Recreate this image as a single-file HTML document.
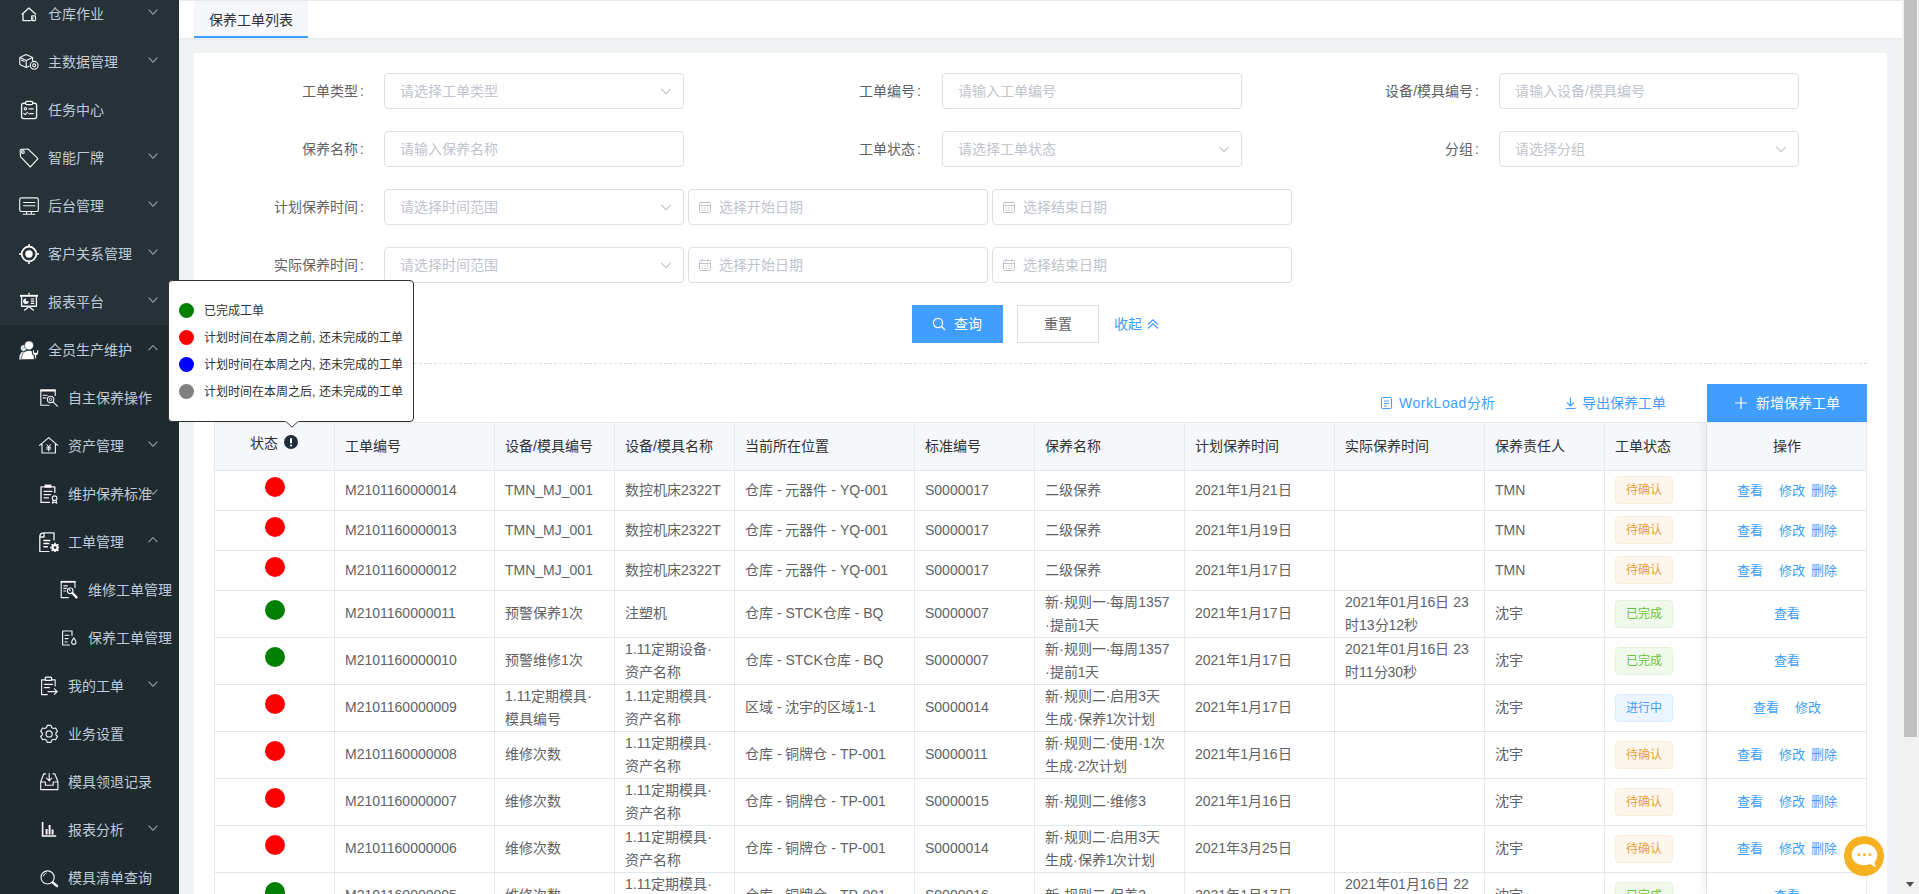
<!DOCTYPE html>
<html lang="zh-CN"><head><meta charset="utf-8"><title>保养工单列表</title><style>
*{box-sizing:border-box;margin:0;padding:0}
html,body{width:1919px;height:894px;overflow:hidden}
body{position:relative;background:#f0f3f4;font-family:"Liberation Sans",sans-serif;font-size:14px;color:#606266}
.abs{position:absolute}
#side{left:0;top:0;width:179px;height:894px;background:#263238;overflow:hidden}
#side .dark{position:absolute;left:0;top:325px;width:179px;height:569px;background:#1f2a2f}
.mi{position:absolute;left:0;width:179px;height:48px;line-height:48px;color:#bfcbd9;font-size:14px;white-space:nowrap}
.mi svg.ic{position:absolute;top:14px;width:20px;height:20px}
.mi span{position:absolute;top:0}
.mi svg.ar{position:absolute;left:147px;top:16px;width:12px;height:12px}
#topbar{left:179px;top:0;width:1723px;height:38px;background:#fff;border-top:1px solid #e7eaee;box-shadow:0 1px 2px rgba(0,21,41,.05)}
#tab{left:194px;top:1px;width:114px;height:37px;background:#f5f7fa;border-bottom:2px solid #409eff;color:#303133;font-size:14px;line-height:38px;text-align:center}
#panel{left:194px;top:53px;width:1693px;height:841px;background:#fff}
#sbar{left:1902px;top:0;width:17px;height:894px;background:#f1f1f1}
#sbar .th{position:absolute;left:2px;top:0;width:13px;height:737px;background:#c1c1c1}
#sbar .dn{position:absolute;left:4px;top:882px;width:0;height:0;border-left:4.5px solid transparent;border-right:4.5px solid transparent;border-top:5px solid #505050}
.lbl{position:absolute;height:36px;line-height:36px;text-align:right;color:#606266;font-size:14px;white-space:nowrap}
.inp{position:absolute;width:300px;height:36px;border:1px solid #dcdfe6;border-radius:4px;background:#fff;color:#c0c4cc;font-size:14px;line-height:34px;padding-left:15px;white-space:nowrap}
.inp svg.ar{position:absolute;right:11px;top:10.500px;width:12px;height:12px}
.inp svg.cal{position:absolute;left:9px;top:10px;width:14px;height:14px}
.inp.date{padding-left:30px}
.btn{position:absolute;height:38px;line-height:38px;font-size:14px;text-align:center;white-space:nowrap}
.link{position:absolute;color:#409eff;font-size:14px;white-space:nowrap;height:20px;line-height:20px}
#dash{left:214px;top:363px;width:1653px;height:0;border-top:1px dashed #d3dde2}
table{border-collapse:separate;border-spacing:0;table-layout:fixed}
#tbl{left:214px;top:422px;width:1653px;border-left:1px solid #e6ebf0;border-top:1px solid #e6ebf0}
#tbl table{width:1652px}
#tbl th{height:48px;background:#f5f7fa;color:#303133;font-weight:normal;text-align:left;padding:0 10px;border-right:1px solid #e6ebf0;border-bottom:1px solid #dfe6ec;font-size:14px;line-height:23px}
#tbl td{height:40px;padding:0 10px;border-right:1px solid #e6ebf0;border-bottom:1px solid #dfe6ec;font-size:14px;line-height:23px;color:#606266;vertical-align:middle;white-space:nowrap;background:#fff}
#tbl td.c,#tbl th.c{text-align:center}
.dot{display:inline-block;width:20px;height:20px;border-radius:50%;vertical-align:middle}
.tag{display:inline-block;height:28px;line-height:26px;padding:0 10px;position:relative;font-size:12px;border:1px solid;border-radius:4px;vertical-align:middle;white-space:nowrap}
.tag.w{background:#fdf6ec;border-color:#faecd8;color:#e6a23c}
.tag.s{background:#f0f9eb;border-color:#e1f3d8;color:#67c23a}
.tag.p{background:#ecf5ff;border-color:#d9ecff;color:#409eff}
td.op{color:#409eff}
td.op a{color:#409eff;text-decoration:none;display:inline-block;font-size:13px}
#tbl tr.sh .tag{top:-1px}
#tbl tr.tl td.one{padding-bottom:1px}
#fixsh{left:1707px;top:422px;width:160px;height:472px;box-shadow:-3px 0 8px rgba(0,0,0,.07);pointer-events:none}
#pop{left:168px;top:280px;width:246px;height:142px;background:#fff;border:1px solid #303133;border-radius:4px;font-size:12px;color:#303133}
#pop .r{position:absolute;left:10px;height:27px;line-height:27px;white-space:nowrap}
#pop .r i{position:absolute;left:0;top:7px;width:15px;height:15px;border-radius:50%}
#pop .r span{position:absolute;left:25px;top:2px}
#chat{left:1844px;top:836px;width:40px;height:40px;border-radius:50%;background:#f5b120}
</style></head><body><div id="side" class="abs"><div class="dark"></div><div class="mi" style="top:-10px"><svg class="ic" style="left:19px" viewBox="0 0 20 20"><path d="M2.8 10.6 L9.9 4 L17 10.6 M4 9.8 V16.6 H12" fill="none" stroke="#eef0f1" stroke-width="1.35" stroke-linejoin="round" stroke-linecap="butt"/><rect x="12.6" y="11.8" width="3.9" height="4.8" rx="0.8" fill="none" stroke="#eef0f1" stroke-width="1.15" stroke-linejoin="round" stroke-linecap="round"/><path d="M13.8 13.5v2" fill="none" stroke="#eef0f1" stroke-width="1.15" stroke-linejoin="round" stroke-linecap="round"/></svg><span style="left:48px">仓库作业</span><svg class="ar" viewBox="0 0 12 12"><path d="M1.5 3.7 L6 8.2 L10.5 3.7" fill="none" stroke="#95a1a9" stroke-width="1.1"/></svg></div><div class="mi" style="top:38px"><svg class="ic" style="left:19px" viewBox="0 0 20 20"><path d="M0.8 5.6 L7.2 2.6 L13.6 5.6 V8.6 M0.8 5.6 V12.6 L7.2 15.6 V8.6 L13.6 5.6 M0.8 5.600 L7.2 8.6 M7.2 15.6 L10 14.300 M2.6 8.2 l2.4 1.1" fill="none" stroke="#eef0f1" stroke-width="1.15" stroke-linejoin="round" stroke-linecap="round"/><circle cx="15.2" cy="13.3" r="3.9" fill="none" stroke="#eef0f1" stroke-width="1.15" stroke-linejoin="round" stroke-linecap="round"/><circle cx="15.2" cy="13.3" r="1.5" fill="none" stroke="#eef0f1" stroke-width="1.15" stroke-linejoin="round" stroke-linecap="round"/></svg><span style="left:48px">主数据管理</span><svg class="ar" viewBox="0 0 12 12"><path d="M1.5 3.7 L6 8.2 L10.5 3.7" fill="none" stroke="#95a1a9" stroke-width="1.1"/></svg></div><div class="mi" style="top:86px"><svg class="ic" style="left:19px" viewBox="0 0 20 20"><rect x="2.600" y="3.2" width="15" height="15.4" rx="2" fill="none" stroke="#eef0f1" stroke-width="1.35" stroke-linejoin="round" stroke-linecap="butt"/><rect x="6.6" y="1.4" width="7" height="3.2" rx="1.2" fill="#263238" stroke="#fff" stroke-width="1.25"/><path d="M9.8 8.8h4.600 M9.8 13.600h4.600 M4.800 13.3 l1.400 1.400 l2.300-2.400" fill="none" stroke="#eef0f1" stroke-width="1.15" stroke-linejoin="round" stroke-linecap="round"/><circle cx="6.4" cy="8.800" r="1.200" fill="none" stroke="#eef0f1" stroke-width="1.15" stroke-linejoin="round" stroke-linecap="round"/></svg><span style="left:48px">任务中心</span></div><div class="mi" style="top:134px"><svg class="ic" style="left:19px" viewBox="0 0 20 20"><path d="M1.2 2.6 Q1.2 1.500 2.400 1.400 L9 1 L19 10.600 L11.300 19 L1.500 8.600 Z" fill="none" stroke="#eef0f1" stroke-width="1.15" stroke-linejoin="round" stroke-linecap="round"/><circle cx="3.900" cy="4" r="1.400" fill="none" stroke="#eef0f1" stroke-width="1.15" stroke-linejoin="round" stroke-linecap="round"/></svg><span style="left:48px">智能厂牌</span><svg class="ar" viewBox="0 0 12 12"><path d="M1.5 3.7 L6 8.2 L10.5 3.7" fill="none" stroke="#95a1a9" stroke-width="1.1"/></svg></div><div class="mi" style="top:182px"><svg class="ic" style="left:19px" viewBox="0 0 20 20"><rect x="0.700" y="1.900" width="18.600" height="13.600" rx="1.600" fill="none" stroke="#eef0f1" stroke-width="1.15" stroke-linejoin="round" stroke-linecap="round"/><path d="M4.600 6.500h11.200 M4.600 9.700h11.200" fill="none" stroke="#eef0f1" stroke-width="1.15" stroke-linejoin="round" stroke-linecap="round"/><path d="M4.200 18.200h11.600 M7.600 15.600v2.400 M12.400 15.600v2.400" fill="none" stroke="#eef0f1" stroke-width="1.15" stroke-linejoin="round" stroke-linecap="round"/></svg><span style="left:48px">后台管理</span><svg class="ar" viewBox="0 0 12 12"><path d="M1.5 3.7 L6 8.2 L10.5 3.7" fill="none" stroke="#95a1a9" stroke-width="1.1"/></svg></div><div class="mi" style="top:230px"><svg class="ic" style="left:19px" viewBox="0 0 20 20"><circle cx="10" cy="10" r="7.300" fill="none" stroke="#fff" stroke-width="1.700"/><circle cx="10" cy="10" r="3.700" fill="#fff"/><path d="M10 0v2.400 M10 17.600V20 M0 10h2.400 M17.600 10H20" stroke="#fff" stroke-width="1.500" stroke-linecap="round"/></svg><span style="left:48px">客户关系管理</span><svg class="ar" viewBox="0 0 12 12"><path d="M1.5 3.7 L6 8.2 L10.5 3.7" fill="none" stroke="#95a1a9" stroke-width="1.1"/></svg></div><div class="mi" style="top:278px"><svg class="ic" style="left:19px" viewBox="0 0 20 20"><path d="M1 3.800h18" stroke="#fff" stroke-width="1.900" fill="none"/><path d="M10 0.800V3.400 M2.600 4.200V14.200H17.400V4.200 M10 14.400 L5.200 18.400 M10 14.400 L14.800 18.400" fill="none" stroke="#eef0f1" stroke-width="1.35" stroke-linejoin="round" stroke-linecap="butt"/><circle cx="6.900" cy="9.200" r="2.700" fill="#fff"/><path d="M6.900 9.200 L6.900 6 A3.200 3.200 0 0 1 10.100 9.200Z" fill="#263238"/><path d="M11.800 7h3.400 M11.800 9.200h3.400 M11.800 11.400h3.400" stroke="#fff" stroke-width="1.200" fill="none"/></svg><span style="left:48px">报表平台</span><svg class="ar" viewBox="0 0 12 12"><path d="M1.5 3.7 L6 8.2 L10.5 3.7" fill="none" stroke="#95a1a9" stroke-width="1.1"/></svg></div><div class="mi" style="top:326px"><svg class="ic" style="left:19px" viewBox="0 0 20 20"><circle cx="4.6" cy="8" r="2.9" fill="#dfe2e4"/><path d="M0.2 19.500C0.200 14.500 1.800 11.600 5 11.600L7.500 19.500z" fill="#dfe2e4"/><circle cx="10" cy="5.400" r="4.500" fill="#fff" stroke="#1f2a2f" stroke-width="0.600"/><path d="M2.600 19.500C2.600 13.400 5.400 10.400 10 10.400c4.600 0 7 3 7 9.100z" fill="#fff" stroke="#1f2a2f" stroke-width="0.600"/><path d="M13.400 9.600h2.200v2.600h2v-2.600h2.200v3.600a3.200 3.200 0 0 1-2 2.300v3.400h-2.400v-3.400a3.200 3.200 0 0 1-2-2.300z" fill="#fff" stroke="#1f2a2f" stroke-width="1.100"/></svg><span style="left:48px">全员生产维护</span><svg class="ar" viewBox="0 0 12 12"><path d="M1.5 8.2 L6 3.7 L10.5 8.2" fill="none" stroke="#95a1a9" stroke-width="1.1"/></svg></div><div class="mi" style="top:374px"><svg class="ic" style="left:39px" viewBox="0 0 20 20"><path d="M1.200 2.400h15.600" stroke="#fff" stroke-width="2.200" fill="none"/><path d="M1.800 3V17.200H10 M16.200 3V7.600" fill="none" stroke="#eef0f1" stroke-width="1.15" stroke-linejoin="round" stroke-linecap="round"/><path d="M4.200 7.200h4 M4.200 9.800h2.600" fill="none" stroke="#eef0f1" stroke-width="1.15" stroke-linejoin="round" stroke-linecap="round"/><circle cx="11.600" cy="11.400" r="3.200" fill="none" stroke="#eef0f1" stroke-width="1.15" stroke-linejoin="round" stroke-linecap="round"/><circle cx="11.600" cy="11.400" r="1.200" fill="none" stroke="#fff" stroke-width="0.800"/><path d="M14 13.800 L18.400 18.200" fill="none" stroke="#eef0f1" stroke-width="1.15" stroke-linejoin="round" stroke-linecap="round"/></svg><span style="left:68px">自主保养操作</span></div><div class="mi" style="top:422px"><svg class="ic" style="left:39px" viewBox="0 0 20 20"><path d="M0.600 9.400 L9.700 1.600 L18.800 9.400 M3 8.200V17H16.400V8.200" fill="none" stroke="#eef0f1" stroke-width="1.15" stroke-linejoin="round" stroke-linecap="round"/><path d="M7.700 8.400 L9.700 10.800 L11.700 8.400 M7.300 11.200h4.800 M7.300 13h4.800 M9.700 10.800V15.400" stroke="#fff" stroke-width="1" fill="none"/></svg><span style="left:68px">资产管理</span><svg class="ar" viewBox="0 0 12 12"><path d="M1.5 3.7 L6 8.2 L10.5 3.7" fill="none" stroke="#95a1a9" stroke-width="1.1"/></svg></div><div class="mi" style="top:470px"><svg class="ic" style="left:39px" viewBox="0 0 20 20"><path d="M15.800 9V2.800H2V18.400H11" fill="none" stroke="#eef0f1" stroke-width="1.35" stroke-linejoin="round" stroke-linecap="butt"/><path d="M5.600 0.600h6.800v3h-6.800z" fill="#fff"/><path d="M5 7.400h8 M5 10.600h6.600 M5 13.800h4.600" fill="none" stroke="#eef0f1" stroke-width="1.15" stroke-linejoin="round" stroke-linecap="round"/><circle cx="15.600" cy="14.200" r="2.300" fill="none" stroke="#eef0f1" stroke-width="1.15" stroke-linejoin="round" stroke-linecap="round"/><path d="M14.200 16.400 L13.400 19.200 L15.600 18 L17.800 19.200 L17 16.400" fill="none" stroke="#eef0f1" stroke-width="1.15" stroke-linejoin="round" stroke-linecap="round"/></svg><span style="left:68px">维护保养标准</span><svg class="ar" viewBox="0 0 12 12"><path d="M1.5 3.7 L6 8.2 L10.5 3.7" fill="none" stroke="#95a1a9" stroke-width="1.1"/></svg></div><div class="mi" style="top:518px"><svg class="ic" style="left:39px" viewBox="0 0 20 20"><path d="M15 8.400V0.800H5 Q0.800 0.800 0.800 5V19.600H10.400 M5 0.800V5H0.800" fill="none" stroke="#eef0f1" stroke-width="1.35" stroke-linejoin="round" stroke-linecap="butt"/><path d="M4.400 8.400h7 M4.400 11.600h6 M4.400 14.800h4.400" stroke="#fff" stroke-width="1.500" fill="none"/><circle cx="16" cy="15.600" r="2.500" fill="none" stroke="#fff" stroke-width="2.200"/><path d="M16 10.800v1.600 M16 18.800v1.600 M11.200 15.600h1.600 M19.200 15.600h1.600 M12.600 12.200l1.200 1.200 M18.200 17.800l1.200 1.200 M19.400 12.200l-1.200 1.200 M13.800 17.800l-1.200 1.200" stroke="#fff" stroke-width="1.600" fill="none"/></svg><span style="left:68px">工单管理</span><svg class="ar" viewBox="0 0 12 12"><path d="M1.5 8.2 L6 3.7 L10.5 8.2" fill="none" stroke="#95a1a9" stroke-width="1.1"/></svg></div><div class="mi" style="top:566px"><svg class="ic" style="left:59px" viewBox="0 0 20 20"><path d="M1.600 1.800h15" stroke="#fff" stroke-width="1.800" fill="none"/><path d="M2.200 2.400V17.600H9.400 M16 2.400V7.600" fill="none" stroke="#eef0f1" stroke-width="1.15" stroke-linejoin="round" stroke-linecap="round"/><path d="M4.800 5.800h3.600 M4.800 8.400h2.600 M4.800 11h2" fill="none" stroke="#eef0f1" stroke-width="1.15" stroke-linejoin="round" stroke-linecap="round"/><circle cx="11.200" cy="10.800" r="2.800" fill="none" stroke="#eef0f1" stroke-width="1.15" stroke-linejoin="round" stroke-linecap="round"/><path d="M10 9.400 l1.200 1.200" fill="none" stroke="#eef0f1" stroke-width="1.15" stroke-linejoin="round" stroke-linecap="round"/><path d="M13.400 13 L17.600 17.400" stroke="#fff" stroke-width="2.300" stroke-linecap="round"/></svg><span style="left:88px">维修工单管理</span></div><div class="mi" style="top:614px"><svg class="ic" style="left:59px" viewBox="0 0 20 20"><path d="M13 7.600V3H3.600V17H10.400" fill="none" stroke="#eef0f1" stroke-width="1.15" stroke-linejoin="round" stroke-linecap="round"/><path d="M6 7.200h4 M6 10.600h3 M6 14h2.200" fill="none" stroke="#eef0f1" stroke-width="1.15" stroke-linejoin="round" stroke-linecap="round"/><path d="M14.800 9.800c1.400 2 2.200 3.200 2.200 4.400a2.200 2.200 0 0 1-4.400 0c0-1.200.800-2.400 2.200-4.400z" fill="none" stroke="#eef0f1" stroke-width="1.15" stroke-linejoin="round" stroke-linecap="round"/></svg><span style="left:88px">保养工单管理</span></div><div class="mi" style="top:662px"><svg class="ic" style="left:39px" viewBox="0 0 20 20"><path d="M16.200 10V3.800H2.600V18.600H8.400" fill="none" stroke="#eef0f1" stroke-width="1.15" stroke-linejoin="round" stroke-linecap="round"/><rect x="6.200" y="1.200" width="6.400" height="3.200" rx="1" fill="#1f2a2f" stroke="#fff" stroke-width="1.250"/><path d="M5.400 8.400h8 M5.400 11.600h5" fill="none" stroke="#eef0f1" stroke-width="1.15" stroke-linejoin="round" stroke-linecap="round"/><path d="M9 15.600h9 M15.400 12.800l2.800 2.800-2.800 2.800" fill="none" stroke="#eef0f1" stroke-width="1.15" stroke-linejoin="round" stroke-linecap="round"/></svg><span style="left:68px">我的工单</span><svg class="ar" viewBox="0 0 12 12"><path d="M1.5 3.7 L6 8.2 L10.5 3.7" fill="none" stroke="#95a1a9" stroke-width="1.1"/></svg></div><div class="mi" style="top:710px"><svg class="ic" style="left:39px" viewBox="0 0 20 20"><path d="M8.200 1.400h3.800l.700 2.200 1.600.900 2.300-.500 1.900 3.300-1.600 1.700v1.800l1.600 1.700-1.900 3.300-2.300-.500-1.600.900-.700 2.200H8.200l-.700-2.200-1.600-.900-2.300.500-1.900-3.300 1.600-1.700V9l-1.600-1.700 1.900-3.300 2.300.500 1.600-.900z" fill="none" stroke="#eef0f1" stroke-width="1.15" stroke-linejoin="round" stroke-linecap="round"/><circle cx="10.100" cy="9.900" r="3.100" fill="none" stroke="#eef0f1" stroke-width="1.15" stroke-linejoin="round" stroke-linecap="round"/></svg><span style="left:68px">业务设置</span></div><div class="mi" style="top:758px"><svg class="ic" style="left:39px" viewBox="0 0 20 20"><path d="M6.600 1.800H4.800 L1.700 9.800V17.600H18.900V9.800 L15.800 1.800H14 M1.700 10H6.400 V13.200H14.200V10H18.900" fill="none" stroke="#eef0f1" stroke-width="1.15" stroke-linejoin="round" stroke-linecap="round"/><path d="M10.200 1.600v7 M7.600 6.200 L10.200 8.800 L12.800 6.200" fill="none" stroke="#eef0f1" stroke-width="1.15" stroke-linejoin="round" stroke-linecap="round"/></svg><span style="left:68px">模具领退记录</span></div><div class="mi" style="top:806px"><svg class="ic" style="left:39px" viewBox="0 0 20 20"><path d="M3.600 2v14h13.600" fill="none" stroke="#fff" stroke-width="1.600"/><path d="M7.600 9v5.400 M10.600 5v9.400 M13.600 9.600v4.800" stroke="#fff" stroke-width="1.900" fill="none"/></svg><span style="left:68px">报表分析</span><svg class="ar" viewBox="0 0 12 12"><path d="M1.5 3.7 L6 8.2 L10.5 3.7" fill="none" stroke="#95a1a9" stroke-width="1.1"/></svg></div><div class="mi" style="top:854px"><svg class="ic" style="left:39px" viewBox="0 0 20 20"><circle cx="8.600" cy="9.400" r="6.600" fill="none" stroke="#eef0f1" stroke-width="1.15" stroke-linejoin="round" stroke-linecap="round"/><path d="M13.600 14.400 L18 18" stroke="#fff" stroke-width="2.400" stroke-linecap="round"/><path d="M4.400 8.400c.400-1.800 1.600-3 3.200-3.400" stroke="#fff" stroke-width="1" fill="none"/></svg><span style="left:68px">模具清单查询</span></div></div><div id="topbar" class="abs"></div><div id="tab" class="abs">保养工单列表</div><div id="panel" class="abs"></div><div class="lbl" style="left:164px;width:200px;top:73px">工单类型<span style="margin-left:2px">:</span></div><div class="inp" style="left:384px;top:73px">请选择工单类型<svg class="ar" viewBox="0 0 12 12"><path d="M1.2 3.800 L6 8.600 L10.800 3.800" fill="none" stroke="#c0c4cc" stroke-width="1.100"/></svg></div><div class="lbl" style="left:721px;width:200px;top:73px">工单编号<span style="margin-left:2px">:</span></div><div class="inp" style="left:942px;top:73px">请输入工单编号</div><div class="lbl" style="left:1279px;width:200px;top:73px">设备/模具编号<span style="margin-left:2px">:</span></div><div class="inp" style="left:1499px;top:73px">请输入设备/模具编号</div><div class="lbl" style="left:164px;width:200px;top:131px">保养名称<span style="margin-left:2px">:</span></div><div class="inp" style="left:384px;top:131px">请输入保养名称</div><div class="lbl" style="left:721px;width:200px;top:131px">工单状态<span style="margin-left:2px">:</span></div><div class="inp" style="left:942px;top:131px">请选择工单状态<svg class="ar" viewBox="0 0 12 12"><path d="M1.2 3.800 L6 8.600 L10.800 3.800" fill="none" stroke="#c0c4cc" stroke-width="1.100"/></svg></div><div class="lbl" style="left:1279px;width:200px;top:131px">分组<span style="margin-left:2px">:</span></div><div class="inp" style="left:1499px;top:131px">请选择分组<svg class="ar" viewBox="0 0 12 12"><path d="M1.2 3.800 L6 8.600 L10.800 3.800" fill="none" stroke="#c0c4cc" stroke-width="1.100"/></svg></div><div class="lbl" style="left:164px;width:200px;top:189px">计划保养时间<span style="margin-left:2px">:</span></div><div class="inp" style="left:384px;top:189px">请选择时间范围<svg class="ar" viewBox="0 0 12 12"><path d="M1.2 3.800 L6 8.600 L10.800 3.800" fill="none" stroke="#c0c4cc" stroke-width="1.100"/></svg></div><div class="inp date" style="left:688px;top:189px">选择开始日期<svg class="cal" viewBox="0 0 14 14"><rect x="1.500" y="2.500" width="11" height="10" rx="1" fill="none" stroke="#c0c4cc" stroke-width="1"/><path d="M1.500 5.500h11 M4 1v2.500 M10 1v2.500 M3.500 8h1.500 M6.200 8h1.500 M9 8h1.500 M3.500 10.500h1.500 M6.200 10.500h1.500 M9 10.500h1.500" stroke="#c0c4cc" stroke-width="1" fill="none"/></svg></div><div class="inp date" style="left:992px;top:189px">选择结束日期<svg class="cal" viewBox="0 0 14 14"><rect x="1.500" y="2.500" width="11" height="10" rx="1" fill="none" stroke="#c0c4cc" stroke-width="1"/><path d="M1.500 5.500h11 M4 1v2.500 M10 1v2.500 M3.500 8h1.500 M6.200 8h1.500 M9 8h1.500 M3.500 10.500h1.500 M6.200 10.500h1.500 M9 10.500h1.500" stroke="#c0c4cc" stroke-width="1" fill="none"/></svg></div><div class="lbl" style="left:164px;width:200px;top:247px">实际保养时间<span style="margin-left:2px">:</span></div><div class="inp" style="left:384px;top:247px">请选择时间范围<svg class="ar" viewBox="0 0 12 12"><path d="M1.2 3.800 L6 8.600 L10.800 3.800" fill="none" stroke="#c0c4cc" stroke-width="1.100"/></svg></div><div class="inp date" style="left:688px;top:247px">选择开始日期<svg class="cal" viewBox="0 0 14 14"><rect x="1.500" y="2.500" width="11" height="10" rx="1" fill="none" stroke="#c0c4cc" stroke-width="1"/><path d="M1.500 5.500h11 M4 1v2.500 M10 1v2.500 M3.500 8h1.500 M6.200 8h1.500 M9 8h1.500 M3.500 10.500h1.500 M6.200 10.500h1.500 M9 10.500h1.500" stroke="#c0c4cc" stroke-width="1" fill="none"/></svg></div><div class="inp date" style="left:992px;top:247px">选择结束日期<svg class="cal" viewBox="0 0 14 14"><rect x="1.500" y="2.500" width="11" height="10" rx="1" fill="none" stroke="#c0c4cc" stroke-width="1"/><path d="M1.500 5.500h11 M4 1v2.500 M10 1v2.500 M3.500 8h1.500 M6.200 8h1.500 M9 8h1.500 M3.500 10.500h1.500 M6.200 10.500h1.500 M9 10.500h1.500" stroke="#c0c4cc" stroke-width="1" fill="none"/></svg></div><div class="btn" style="left:912px;top:305px;width:91px;background:#409eff;color:#fff"><svg style="position:absolute;left:20px;top:12px;width:14px;height:14px" viewBox="0 0 14 14"><circle cx="6" cy="6" r="4.600" fill="none" stroke="#fff" stroke-width="1.200"/><path d="M9.300 9.300 L13 13" stroke="#fff" stroke-width="1.300"/></svg><span style="position:absolute;left:42px;top:0">查询</span></div><div class="btn" style="left:1017px;top:305px;width:82px;background:#fff;border:1px solid #dcdfe6;color:#606266;line-height:36px">重置</div><div class="link" style="left:1114px;top:314px">收起<svg style="position:absolute;left:33px;top:4px;width:12px;height:12px" viewBox="0 0 12 12"><path d="M1 6.500 L6 1.800 L11 6.500 M1 10.500 L6 5.800 L11 10.500" fill="none" stroke="#409eff" stroke-width="1.100"/></svg></div><div id="dash" class="abs"></div><div class="link" style="left:1399px;top:393px"><svg style="position:absolute;left:-19px;top:3px;width:13px;height:14px" viewBox="0 0 13 14"><rect x="1.500" y="1.500" width="10" height="11" rx="1" fill="none" stroke="#409eff" stroke-width="1"/><path d="M4 5h5 M4 7.500h5 M4 10h3" stroke="#409eff" stroke-width="1"/></svg><span style="letter-spacing:0.550px">WorkLoad</span>分析</div><div class="link" style="left:1582px;top:393px"><svg style="position:absolute;left:-18px;top:3px;width:13px;height:14px" viewBox="0 0 13 14"><path d="M6.500 1.500v8 M3 6.500 L6.500 10 L10 6.500 M1.500 12.500h10" fill="none" stroke="#409eff" stroke-width="1.100"/></svg>导出保养工单</div><div class="btn" style="left:1707px;top:384px;width:160px;background:#409eff;color:#fff"><svg style="position:absolute;left:28px;top:13px;width:12px;height:12px" viewBox="0 0 12 12"><path d="M6 0v12 M0 6h12" stroke="#fff" stroke-width="1.200"/></svg><span style="position:absolute;left:49px;top:0">新增保养工单</span></div><div id="tbl" class="abs"><table><colgroup><col style="width:120px"><col style="width:160px"><col style="width:120px"><col style="width:120px"><col style="width:180px"><col style="width:120px"><col style="width:150px"><col style="width:150px"><col style="width:150px"><col style="width:120px"><col style="width:102px"><col style="width:160px"></colgroup><thead><tr><th class="c" style="padding-right:12px"><span style="position:relative;top:-3px">状态</span><svg style="width:14px;height:14px;vertical-align:middle;margin-left:6px;position:relative;top:-5px" viewBox="0 0 14 14"><circle cx="7" cy="7" r="7" fill="#1f2d3d"/><rect x="6" y="3" width="2" height="5.500" rx="1" fill="#fff"/><circle cx="7" cy="10.500" r="1.100" fill="#fff"/></svg></th><th>工单编号</th><th>设备/模具编号</th><th>设备/模具名称</th><th>当前所在位置</th><th>标准编号</th><th>保养名称</th><th>计划保养时间</th><th>实际保养时间</th><th>保养责任人</th><th>工单状态</th><th class="c">操作</th></tr></thead><tbody><tr class="sh"><td class="c"><span class="dot" style="background:red;position:relative;top:-4.500px"></span></td><td class="one">M2101160000014</td><td class="one">TMN_MJ_001</td><td class="one">数控机床2322T</td><td class="one">仓库 - 元器件 - YQ-001</td><td class="one">S0000017</td><td class="one">二级保养</td><td class="one">2021年1月21日</td><td class="one"></td><td class="one">TMN</td><td><span class="tag w">待确认</span></td><td class="c op one"><a>查看</a><a style="margin-left:16px">修改</a><a style="margin-left:6px">删除</a></td></tr><tr class="sh"><td class="c"><span class="dot" style="background:red;position:relative;top:-4.500px"></span></td><td class="one">M2101160000013</td><td class="one">TMN_MJ_001</td><td class="one">数控机床2322T</td><td class="one">仓库 - 元器件 - YQ-001</td><td class="one">S0000017</td><td class="one">二级保养</td><td class="one">2021年1月19日</td><td class="one"></td><td class="one">TMN</td><td><span class="tag w">待确认</span></td><td class="c op one"><a>查看</a><a style="margin-left:16px">修改</a><a style="margin-left:6px">删除</a></td></tr><tr class="sh"><td class="c"><span class="dot" style="background:red;position:relative;top:-4.500px"></span></td><td class="one">M2101160000012</td><td class="one">TMN_MJ_001</td><td class="one">数控机床2322T</td><td class="one">仓库 - 元器件 - YQ-001</td><td class="one">S0000017</td><td class="one">二级保养</td><td class="one">2021年1月17日</td><td class="one"></td><td class="one">TMN</td><td><span class="tag w">待确认</span></td><td class="c op one"><a>查看</a><a style="margin-left:16px">修改</a><a style="margin-left:6px">删除</a></td></tr><tr class="tl"><td class="c"><span class="dot" style="background:green;position:relative;top:-4.500px"></span></td><td class="one">M2101160000011</td><td class="one">预警保养1次</td><td class="one">注塑机</td><td class="one">仓库 - STCK仓库 - BQ</td><td class="one">S0000007</td><td>新·规则一·每周1357<br>·提前1天</td><td class="one">2021年1月17日</td><td>2021年01月16日 23<br>时13分12秒</td><td class="one">沈宇</td><td><span class="tag s">已完成</span></td><td class="c op one"><a>查看</a></td></tr><tr class="tl"><td class="c"><span class="dot" style="background:green;position:relative;top:-4.500px"></span></td><td class="one">M2101160000010</td><td class="one">预警维修1次</td><td>1.11定期设备·<br>资产名称</td><td class="one">仓库 - STCK仓库 - BQ</td><td class="one">S0000007</td><td>新·规则一·每周1357<br>·提前1天</td><td class="one">2021年1月17日</td><td>2021年01月16日 23<br>时11分30秒</td><td class="one">沈宇</td><td><span class="tag s">已完成</span></td><td class="c op one"><a>查看</a></td></tr><tr class="tl"><td class="c"><span class="dot" style="background:red;position:relative;top:-4.500px"></span></td><td class="one">M2101160000009</td><td>1.11定期模具·<br>模具编号</td><td>1.11定期模具·<br>资产名称</td><td class="one">区域 - 沈宇的区域1-1</td><td class="one">S0000014</td><td>新·规则二·启用3天<br>生成·保养1次计划</td><td class="one">2021年1月17日</td><td class="one"></td><td class="one">沈宇</td><td><span class="tag p">进行中</span></td><td class="c op one"><a>查看</a><a style="margin-left:16px">修改</a></td></tr><tr class="tl"><td class="c"><span class="dot" style="background:red;position:relative;top:-4.500px"></span></td><td class="one">M2101160000008</td><td class="one">维修次数</td><td>1.11定期模具·<br>资产名称</td><td class="one">仓库 - 铜牌仓 - TP-001</td><td class="one">S0000011</td><td>新·规则二·使用·1次<br>生成·2次计划</td><td class="one">2021年1月16日</td><td class="one"></td><td class="one">沈宇</td><td><span class="tag w">待确认</span></td><td class="c op one"><a>查看</a><a style="margin-left:16px">修改</a><a style="margin-left:6px">删除</a></td></tr><tr class="tl"><td class="c"><span class="dot" style="background:red;position:relative;top:-4.500px"></span></td><td class="one">M2101160000007</td><td class="one">维修次数</td><td>1.11定期模具·<br>资产名称</td><td class="one">仓库 - 铜牌仓 - TP-001</td><td class="one">S0000015</td><td class="one">新·规则二·维修3</td><td class="one">2021年1月16日</td><td class="one"></td><td class="one">沈宇</td><td><span class="tag w">待确认</span></td><td class="c op one"><a>查看</a><a style="margin-left:16px">修改</a><a style="margin-left:6px">删除</a></td></tr><tr class="tl"><td class="c"><span class="dot" style="background:red;position:relative;top:-4.500px"></span></td><td class="one">M2101160000006</td><td class="one">维修次数</td><td>1.11定期模具·<br>资产名称</td><td class="one">仓库 - 铜牌仓 - TP-001</td><td class="one">S0000014</td><td>新·规则二·启用3天<br>生成·保养1次计划</td><td class="one">2021年3月25日</td><td class="one"></td><td class="one">沈宇</td><td><span class="tag w">待确认</span></td><td class="c op one"><a>查看</a><a style="margin-left:16px">修改</a><a style="margin-left:6px">删除</a></td></tr><tr class="tl"><td class="c"><span class="dot" style="background:green;position:relative;top:-4.500px"></span></td><td class="one">M2101160000005</td><td class="one">维修次数</td><td>1.11定期模具·<br>资产名称</td><td class="one">仓库 - 铜牌仓 - TP-001</td><td class="one">S0000016</td><td class="one">新·规则二·保养2</td><td class="one">2021年1月17日</td><td>2021年01月16日 22<br>时10分10秒</td><td class="one">沈宇</td><td><span class="tag s">已完成</span></td><td class="c op one"><a>查看</a></td></tr></tbody></table></div><div id="fixsh" class="abs"></div><div id="pop" class="abs"><div class="r" style="top:15px"><i style="background:green"></i><span>已完成工单</span></div><div class="r" style="top:42px"><i style="background:red"></i><span>计划时间在本周之前, 还未完成的工单</span></div><div class="r" style="top:69px"><i style="background:blue"></i><span>计划时间在本周之内, 还未完成的工单</span></div><div class="r" style="top:96px"><i style="background:gray"></i><span>计划时间在本周之后, 还未完成的工单</span></div><svg style="position:absolute;left:115.500px;top:140px;width:14px;height:8px" viewBox="0 0 14 8"><path d="M0 0 H14 L7 6.500 Z" fill="#fff"/><path d="M1 0.500 L7 6.200 L13 0.500" fill="none" stroke="#303133" stroke-width="1"/></svg></div><div id="chat" class="abs"><svg style="position:absolute;left:5.500px;top:7px;width:30px;height:27.800px" viewBox="0 0 27 25"><path d="M13 1C6.400 1 1.500 5.200 1.500 10.500S6.400 20 13 20c2 0 3.800-.400 5.400-1l4.600 3-1-4.800c1.600-1.700 2.500-3.900 2.500-6.700C24.500 5.200 19.600 1 13 1z" fill="#fff"/><circle cx="8" cy="10.500" r="1.300" fill="#f5b120"/><circle cx="13" cy="10.500" r="1.300" fill="#f5b120"/><circle cx="18" cy="10.500" r="1.300" fill="#f5b120"/></svg></div><div id="sbar" class="abs"><div class="th"></div><div class="dn"></div></div></body></html>
